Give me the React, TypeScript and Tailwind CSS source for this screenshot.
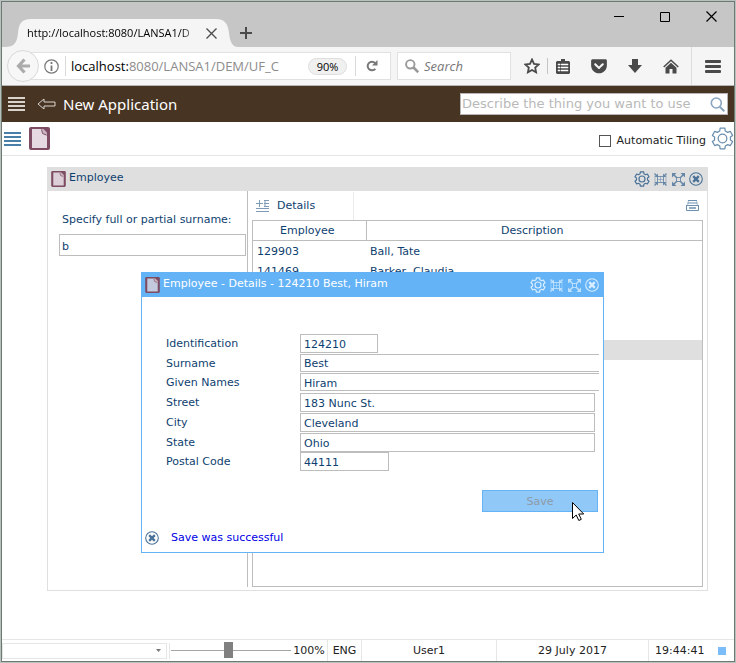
import React from "react";
import { FaGetPocket } from "react-icons/fa";

interface IconProps {
  className?: string;
}

interface Field {
  id: string;
  label: string;
  value: string;
  style: string;
}

const employees = [
  { id: "129903", name: "Ball, Tate" },
  { id: "141469", name: "Barker, Claudia" },
  { id: "", name: "" },
  { id: "", name: "" },
  { id: "", name: "" },
  { id: "", name: "", selected: true },
];

const fields: Field[] = [
  { id: "identification", label: "Identification", value: "124210", style: "h-[19px] w-[78px] border" },
  { id: "surname", label: "Surname", value: "Best", style: "h-[18px] flex-1 border-y border-l" },
  { id: "given", label: "Given Names", value: "Hiram", style: "h-[18px] flex-1 border-y border-l" },
  { id: "street", label: "Street", value: "183 Nunc St.", style: "h-[19px] mr-1 flex-1 border" },
  { id: "city", label: "City", value: "Cleveland", style: "h-[19px] mr-1 flex-1 border" },
  { id: "state", label: "State", value: "Ohio", style: "h-[19px] mr-1 flex-1 border" },
  { id: "postal", label: "Postal Code", value: "44111", style: "h-[19px] w-[89px] border" },
];

// six wide teeth with narrow notches between them
const gearPoints = [0, 60, 120, 180, 240, 300]
  .flatMap((tooth) => [
    [tooth - 20, 8.4],
    [tooth - 13, 11],
    [tooth + 13, 11],
    [tooth + 20, 8.4],
  ])
  .map(([angle, radius]) => {
    const rad = (angle * Math.PI) / 180;
    return `${(12 + radius * Math.sin(rad)).toFixed(2)},${(12 - radius * Math.cos(rad)).toFixed(2)}`;
  })
  .join(" ");

const GearIcon: React.FC<IconProps & { strokeWidth?: number }> = ({ className, strokeWidth = 1.8 }) => (
  <svg
    className={className}
    viewBox="0 0 24 24"
    fill="none"
    stroke="currentColor"
    strokeWidth={strokeWidth}
    strokeLinejoin="round"
  >
    <polygon points={gearPoints} />
    <circle cx="12" cy="12" r="4.500" />
  </svg>
);

const PageIcon: React.FC<IconProps> = ({ className }) => (
  <svg className={className} viewBox="0 0 21 23">
    <rect width="21" height="23" rx="2" className="fill-[#7d4b62]" />
    <path d="M3 2h10l5 5v14H3z" fill="currentColor" />
    <path d="M12 2h2.500L18 5.500V9l-4-2z" className="fill-[#c9b3c0]" />
    <path d="M12.500 2.500 13.500 6.500 17.500 8" className="fill-none stroke-[#7d4b62]" strokeWidth="0.900" />
  </svg>
);

const MenuLines: React.FC<IconProps> = ({ className }) => (
  <svg className={className} viewBox="0 0 17 14" fill="currentColor">
    <path d="M0 0h17v2H0zM0 4h17v2H0zM0 8h17v2H0zM0 12h17v2H0z" />
  </svg>
);

const CloseCircle: React.FC<IconProps> = ({ className }) => (
  <svg className={className} viewBox="0 0 14 14" fill="none" stroke="currentColor">
    <circle cx="7" cy="7" r="6.300" strokeWidth="1.100" />
    <path d="M4.200 4.200l5.600 5.600M9.800 4.200 4.200 9.800" strokeWidth="2.400" />
  </svg>
);

const RestoreIcon: React.FC<IconProps> = ({ className }) => (
  <svg className={className} viewBox="0 0 13 13" fill="none" stroke="currentColor">
    <rect x="3.500" y="3.500" width="6" height="6" strokeWidth="0.900" />
    <path d="M6.500 3.500v6M3.500 6.500h6" strokeWidth="0.500" />
    <path d="M0.500 0.500 3 3M12.500 0.500 10 3M0.500 12.500 3 10M12.500 12.500 10 10" strokeWidth="1.300" />
    <path d="M4 0.500V4H0.500zM9 0.500V4h3.500zM4 12.500V9H0.500zM9 12.500V9h3.500z" fill="currentColor" stroke="none" />
    <path d="M1 2v9M12 2v9" strokeWidth="0.500" />
  </svg>
);

const MaximizeIcon: React.FC<IconProps> = ({ className }) => (
  <svg className={className} viewBox="0 0 13 13" fill="none" stroke="currentColor">
    <path d="M1.500 1.500 5 5M11.500 1.500 8 5M1.500 11.500 5 8M11.500 11.500 8 8" strokeWidth="1.500" />
    <path d="M0 0h4.500L0 4.500zM13 0v4.500L8.500 0zM0 13V8.500L4.500 13zM13 13H8.500L13 8.500z" fill="currentColor" stroke="none" />
    <rect x="4.500" y="4.500" width="4" height="4" strokeWidth="0.900" />
  </svg>
);

const WindowButtons: React.FC<IconProps> = ({ className }) => (
  <div className={`flex items-center gap-1 ${className}`}>
    <button aria-label="Settings">
      <GearIcon className="size-4" />
    </button>
    <button aria-label="Restore">
      <RestoreIcon className="size-[13px] opacity-80" />
    </button>
    <button aria-label="Maximize" className="ml-px">
      <MaximizeIcon className="size-[13px] opacity-80" />
    </button>
    <button aria-label="Close">
      <CloseCircle className="size-[14px]" />
    </button>
  </div>
);

const Browser = () => (
  <header className="font-['Open_Sans','Noto_Sans',sans-serif]">
    <div className="flex h-[45px] items-start bg-[#c6c6c6]">
      <div className="relative mt-[17px] ml-[3px] flex h-7 w-[233px] items-center pl-[22px] text-[11px] text-black">
        <svg className="absolute inset-0 h-7 w-full" viewBox="0 0 233 28" preserveAspectRatio="none">
          <path
            d="M0 28C9 28 12 24 13 14 14 5 16 0 26 0H211C220 0 223 5 224 14 225 24 228 28 233 28Z"
            className="fill-[#f5f5f5]"
          />
        </svg>
        <span className="relative w-[172px] whitespace-nowrap [mask-image:linear-gradient(to_right,black_90%,transparent)]">
          http://localhost:8080/LANSA1/D
        </span>
        <button aria-label="Close tab" className="relative ml-[7px]">
          <svg className="size-[11px] stroke-[#4a4a4a]" viewBox="0 0 11 11" strokeWidth="1.300">
            <path d="M0.500 0.500l10 10M10.500 0.500l-10 10" />
          </svg>
        </button>
      </div>
      <button aria-label="New tab" className="mt-[25px] ml-0.5">
        <svg className="size-3 stroke-[#4a4a4a]" viewBox="0 0 12 12" strokeWidth="2">
          <path d="M6 0v12M0 6h12" />
        </svg>
      </button>
      <div className="mt-[9px] mr-[17px] ml-auto flex items-center gap-9">
        <button aria-label="Minimize window">
          <svg className="size-2.5 stroke-black" viewBox="0 0 10 10">
            <path d="M0 4.500h10" />
          </svg>
        </button>
        <button aria-label="Maximize window">
          <svg className="size-2.5 fill-none stroke-black" viewBox="0 0 10 10">
            <path d="M0.500 0.500h9v9h-9z" />
          </svg>
        </button>
        <button aria-label="Close window">
          <svg className="size-[11px] stroke-black" viewBox="0 0 11 11" strokeWidth="1.200">
            <path d="M0.500 0.500l10 10M10.500 0.500l-10 10" />
          </svg>
        </button>
      </div>
    </div>

    <div className="flex h-[39px] items-center border-b border-[#b5b5b5] bg-[#f5f5f5] text-[#4a4a4a]">
      <button
        aria-label="Back"
        className="z-10 ml-[5px] flex size-8 shrink-0 items-center justify-center rounded-full border border-[#d9d9d9] bg-[#f7f7f7]"
      >
        <svg className="h-4 w-[14px] fill-none stroke-[#ababab]" viewBox="0 0 14 16" strokeWidth="3.200">
          <path d="M8.500 1.500 2.500 8l6 6.500M2.500 8H14" />
        </svg>
      </button>
      <div className="-ml-4 flex h-7 min-w-0 flex-1 items-center border border-[#e1e1e1] bg-white pl-5">
        <svg className="size-[15px] shrink-0 fill-none stroke-[#777]" viewBox="0 0 15 15">
          <circle cx="7.500" cy="7.500" r="6.700" strokeWidth="1.200" />
          <path d="M7.500 3v2M7.500 6.500V12" strokeWidth="1.800" />
        </svg>
        <span className="ml-1.5 h-5 w-px shrink-0 bg-[#d9d9d9]" />
        <div className="ml-[5px] min-w-0 flex-1 text-[13px] whitespace-nowrap text-[#8c8c8c]">
          <span className="text-black">localhost:</span>8080/LANSA1/DEM/UF_C
        </div>
        <button className="h-[17px] w-[39px] shrink-0 rounded-full border border-[#dedede] bg-[#f0f0f0] text-[11px] leading-[15px] text-black">
          90%
        </button>
        <span className="ml-2 h-5 w-px shrink-0 bg-[#d9d9d9]" />
        <button aria-label="Reload" className="mr-3 ml-2.5 shrink-0">
          <svg className="size-3 fill-none stroke-[#777]" viewBox="0 0 12 12">
            <path d="M9.300 8.800A4.300 4.300 0 1 1 9 3" strokeWidth="2" />
            <path d="M11.500 0v5.500H6z" className="fill-[#777]" stroke="none" />
          </svg>
        </button>
      </div>
      <label className="ml-1.5 flex h-7 w-[114px] items-center border border-[#e1e1e1] bg-white pl-[7px]">
        <svg className="size-[14px] shrink-0 fill-none stroke-[#999]" viewBox="0 0 14 14">
          <circle cx="5.300" cy="5.300" r="4.200" strokeWidth="1.900" />
          <path d="M8.500 8.500l4.700 4.700" strokeWidth="2.600" />
        </svg>
        <input
          type="text"
          aria-label="Search"
          placeholder="Search"
          className="ml-[5px] w-full min-w-0 text-[13px] italic outline-none placeholder:text-[#777]"
        />
      </label>
      <button aria-label="Bookmark" className="ml-[13px]">
        <svg className="size-4 fill-none stroke-current" viewBox="0 0 16 16" strokeWidth="1.800">
          <path d="M8 1.500l2 4.300 4.700.600-3.500 3.200.900 4.700L8 12l-4.100 2.300.900-4.700L1.300 6.400 6 5.800z" />
        </svg>
      </button>
      <span className="ml-[7px] h-4 w-px bg-[#c4c4c4]" />
      <button aria-label="Bookmarks list" className="ml-2">
        <svg className="h-[15px] w-[14px]" viewBox="0 0 14 15">
          <path d="M5 0h4v2h4l1 1v11l-1 1H1l-1-1V3l1-1h4z" fill="currentColor" />
          <path d="M2 5h2v1H2zM5 5h7v1H5zM2 8h2v1H2zM5 8h7v1H5zM2 11h2v1H2zM5 11h7v1H5z" className="fill-white stroke-white" strokeWidth="0.500" />
        </svg>
      </button>
      <button aria-label="Pocket" className="ml-5">
        <FaGetPocket className="size-[18px]" />
      </button>
      <button aria-label="Downloads" className="ml-5">
        <svg className="h-[14px] w-[14px]" viewBox="0 0 14 14" fill="currentColor">
          <path d="M4 0h6v6h4L7 14 0 6h4z" />
        </svg>
      </button>
      <button aria-label="Home" className="ml-[21px]">
        <svg className="h-[15px] w-4" viewBox="0 0 16 15">
          <path d="M0.700 8 8 1.300 15.300 8" fill="none" stroke="currentColor" strokeWidth="1.500" />
          <path d="M2.500 8.700 8 3.700l5.500 5V14.500H9.500V10H6.500v4.500h-4z" fill="currentColor" />
        </svg>
      </button>
      <span className="ml-3 h-full w-px bg-[#dcdcdc]" />
      <button aria-label="Open menu" className="mr-[13px] ml-[13px]">
        <svg className="h-[13px] w-4" viewBox="0 0 16 13" fill="currentColor">
          <rect width="16" height="3" rx="1" />
          <rect y="5" width="16" height="3" rx="1" />
          <rect y="10" width="16" height="3" rx="1" />
        </svg>
      </button>
    </div>
  </header>
);

const AppBar = () => (
  <>
    <div className="flex h-9 items-center bg-[#483422] pr-1.5 pl-1.5">
      <button aria-label="Menu">
        <MenuLines className="h-[14px] w-[17px] text-[#d9d3cd]" />
      </button>
      <button aria-label="Go back" className="ml-3">
        <svg className="h-3 w-[19px] fill-none stroke-[#d9d3cd]" viewBox="0 0 19 12">
          <path d="M1 6l6-5v3h11v4H7v3z" />
        </svg>
      </button>
      <h1 className="ml-[7px] font-['Noto_Sans',sans-serif] text-[15px] text-white">New Application</h1>
      <label className="ml-auto flex h-[22px] w-[268px] items-center border border-[#b5b5b5] bg-white pr-0.5">
        <input
          type="text"
          aria-label="Find"
          placeholder="Describe the thing you want to use"
          className="min-w-0 flex-1 pl-px text-[13px] outline-none placeholder:text-[#b9b9b9]"
        />
        <svg className="size-[15px] fill-none stroke-[#8aa5c1]" viewBox="0 0 15 15">
          <circle cx="6.300" cy="6" r="5" strokeWidth="1.600" />
          <path d="M9.800 9.800l4.500 4.500" strokeWidth="2" />
        </svg>
      </label>
    </div>
    <div className="flex h-[34px] items-center border-b border-[#e6e6e6] pl-0.5">
      <button aria-label="Views">
        <MenuLines className="h-[14px] w-[17px] text-[#4a7fa8]" />
      </button>
      <button aria-label="Employee" className="ml-2">
        <PageIcon className="h-[23px] w-[21px] text-[#e5dae1]" />
      </button>
      <label className="mt-1 ml-auto flex items-center gap-1.5 text-[#222]">
        <input type="checkbox" className="size-3 appearance-none border border-[#555] bg-white" />
        Automatic Tiling
      </label>
      <button aria-label="Options" className="ml-[5px]">
        <GearIcon className="size-[23px] text-[#6b8fae]" strokeWidth={1.3} />
      </button>
    </div>
  </>
);

const EmployeePanel = () => (
  <section className="flex flex-1 flex-col border border-[#dfdfdf] bg-white">
    <div className="-mx-px -mt-px flex h-6 items-center bg-[#dfdfdf] pr-[5px] pl-1">
      <PageIcon className="h-4 w-[15px] text-[#dccfd8]" />
      <h2 className="mb-0.5 ml-[3px]">Employee</h2>
      <WindowButtons className="ml-auto text-[#4a7299]" />
    </div>
    <div className="flex flex-1">
      <div className="mb-[3px] w-[200px] border-r border-[#bdbdbd] pt-[21px] pr-px pl-[11px]">
        <label htmlFor="search-surname" className="ml-[3px] block whitespace-nowrap">
          Specify full or partial surname:
        </label>
        <input
          id="search-surname"
          type="text"
          defaultValue="b"
          className="mt-1.5 h-[22px] w-full border border-[#bdbdbd] px-0.5 pt-0.5 outline-none"
        />
      </div>
      <div className="mr-1 mb-[3px] ml-1 flex flex-1 flex-col">
        <div className="flex h-[29px] items-center pr-1">
          <button className="flex h-7 w-[102px] items-center gap-2 border-r border-[#ebebeb] pl-1">
            <svg className="h-3 w-[13px] text-[#7f9ab5]" viewBox="0 0 13 12" fill="none" stroke="currentColor">
              <path d="M3.500 0v7M0 3.500h7M8 0.500h5M8 3.500h5M8 6.500h5M0 8.500h13M0 11.500h13" />
              <path d="M8 2h2M8 5h2" />
            </svg>
            Details
          </button>
          <button aria-label="Print" className="ml-auto">
            <svg className="h-[11px] w-[13px] text-[#6b8fae]" viewBox="0 0 13 11" fill="none" stroke="currentColor">
              <path d="M2 0.500h9M1.500 3h10M0 5.500h13M0.500 5.500v5h12v-5" />
              <path d="M2.500 0.500l-1 5M10.500 0.500l1 5" strokeWidth="0.500" />
              <path d="M3 8h7" strokeWidth="1.500" />
            </svg>
          </button>
        </div>
        <div className="flex-1 border border-[#bdbdbd]">
          <table className="w-full table-fixed border-collapse">
            <thead>
              <tr className="h-[19px] border-b border-[#bdbdbd]">
                <th className="w-[113px] border-r border-[#bdbdbd] pr-1 pt-0.5 leading-4 font-normal">Employee</th>
                <th className="pt-0.5 pr-1 font-normal">Description</th>
              </tr>
            </thead>
            <tbody>
              {employees.map((employee, index) => (
                <tr key={index} className={`h-5 ${employee.selected ? "bg-[#dfdfdf]" : ""}`}>
                  <td className="pt-[3px] pl-1">{employee.id}</td>
                  <td className="pt-[3px] pl-1">{employee.name}</td>
                </tr>
              ))}
            </tbody>
          </table>
        </div>
      </div>
    </div>
  </section>
);

const DetailsWindow = () => (
  <section className="absolute top-[116px] left-[139px] w-[463px] border border-[#64b3f6] bg-white">
    <div className="flex h-6 items-center bg-[#64b3f6] pr-1 pl-[3px] text-white">
      <PageIcon className="h-4 w-[15px] text-[#c3cade]" />
      <h2 className="mb-0.5 ml-[3px]">Employee - Details - 124210 Best, Hiram</h2>
      <WindowButtons className="ml-auto text-[#d8edff]" />
    </div>
    <form className="pt-[37px]">
      <div className="mr-1 ml-6 grid h-[138px] auto-rows-fr">
        {fields.map((field) => (
          <div key={field.id} className="flex items-start">
            <label htmlFor={field.id} className="w-[134px] pt-0.5">
              {field.label}
            </label>
            <input
              id={field.id}
              type="text"
              defaultValue={field.value}
              className={`min-w-0 border-[#bdbdbd] bg-white px-[3px] pt-0.5 outline-none ${field.style}`}
            />
          </div>
        ))}
      </div>
      <button
        type="button"
        className="mt-[18px] mr-[5px] ml-auto block h-[22px] w-[116px] border border-[#64b3f6] bg-[#90c8f8] pt-px text-[#8e9aa6]"
      >
        Save
      </button>
    </form>
    <div className="flex h-10 items-center pt-3 pl-[3px] text-[#0000e6]">
      <button aria-label="Dismiss message">
        <CloseCircle className="size-[14px] text-[#4a7299]" />
      </button>
      <p className="ml-3">Save was successful</p>
    </div>
    <svg className="absolute top-[229px] right-[19px] h-[19px] w-3" viewBox="0 0 12 19">
      <path
        d="M0.500 0.500v16l3.700-3.500 2.600 5.500 2.500-1.200-2.600-5.300h5z"
        className="fill-white stroke-black"
      />
    </svg>
  </section>
);

const StatusBar = () => (
  <footer className="flex h-[22px] items-center border-t border-[#e6e6e6] text-[#222]">
    <div className="relative h-4 w-[165px]">
      <select aria-label="Theme" className="h-4 w-full appearance-none border border-[#e6e6e6] outline-none" />
      <svg className="pointer-events-none absolute top-1.5 right-1.5 h-[3px] w-[5px] fill-[#777]" viewBox="0 0 5 3">
        <path d="M0 0h5L2.500 3z" />
      </svg>
    </div>
    <span className="ml-0.5 h-4 w-px bg-[#e6e6e6]" />
    <input
      type="range"
      aria-label="Zoom"
      defaultValue={48}
      className="ml-px h-4 w-[120px] appearance-none bg-transparent [&::-webkit-slider-runnable-track]:h-px [&::-webkit-slider-runnable-track]:bg-[#a5a5a5] [&::-webkit-slider-thumb]:-mt-2 [&::-webkit-slider-thumb]:h-4 [&::-webkit-slider-thumb]:w-[9px] [&::-webkit-slider-thumb]:appearance-none [&::-webkit-slider-thumb]:bg-[#808080]"
    />
    <span className="flex h-full w-[37px] items-center justify-center border-r border-[#e6e6e6]">100%</span>
    <span className="flex h-full w-[34px] items-center justify-center border-r border-[#e6e6e6]">ENG</span>
    <span className="flex h-full flex-1 items-center justify-center border-r border-[#e6e6e6]">User1</span>
    <span className="flex h-full w-[152px] items-center justify-center border-r border-[#e6e6e6]">29 July 2017</span>
    <span className="flex h-full w-[85px] items-center justify-between pr-2 pl-1.5">
      19:44:41
      <span className="size-2 bg-[#7bbdf8]" />
    </span>
  </footer>
);

const App: React.FC = () => {
  return (
    <div className="flex min-h-screen flex-col bg-[#b9c1bd] p-px font-['DejaVu_Sans',sans-serif] text-[11px] leading-4 text-[#0f3f70]">
      <div className="flex flex-1 flex-col border border-[#6d7a74] bg-white">
        <Browser />
        <AppBar />
        <main className="relative flex flex-1 flex-col pt-[11px] pr-[26px] pb-12 pl-[45px]">
          <EmployeePanel />
          <DetailsWindow />
        </main>
        <StatusBar />
      </div>
    </div>
  );
};

export default App;
